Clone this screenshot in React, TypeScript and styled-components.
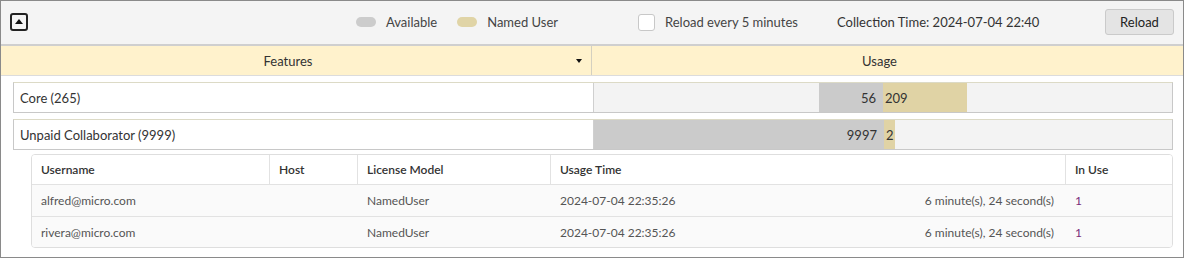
import React from 'react'
import styled, { createGlobalStyle } from 'styled-components'

const GlobalStyle = createGlobalStyle`
  html, body { margin: 0; padding: 0; background: #fff; }
  body { font-family: Lato, "Open Sans", sans-serif; color: #333; }
  * { box-sizing: border-box; }
`;

const Frame = styled.div`
  width: 1184px;
  height: 258px;
  border: 1px solid #8a8a8a;
  background: #fff;
  overflow: hidden;
`;

const Toolbar = styled.div`
  height: 45px;
  background: #f4f4f4;
  border-bottom: 2px solid #cfcfcf;
  display: grid;
  grid-template-columns: 346px 282px 199px 1fr 69px;
  align-items: center;
  padding: 0 9px 1px 9px;
  font-size: 13px;
`;

const CollapseButton = styled.button`
  width: 18px;
  height: 18px;
  border: 2px solid #222;
  border-radius: 3px;
  background: #f4f4f4;
  padding: 0;
  display: flex;
  align-items: center;
  justify-content: center;
  &::after {
    content: '';
    border-left: 4px solid transparent;
    border-right: 4px solid transparent;
    border-bottom: 5px solid #111;
    margin-top: -1px;
  }
`;

const Group = styled.div`
  display: flex;
  align-items: center;
  gap: 10px;
  white-space: nowrap;
`;

const Swatch = styled.span<{ $color: string }>`
  width: 20px;
  height: 10px;
  border-radius: 5px;
  background: ${(p) => p.$color};
`;

const LegendLabel = styled.span`
  color: #444;
  margin-right: 10px;
`;

const Checkbox = styled.span`
  width: 17px;
  height: 17px;
  border: 1px solid #c8c8c8;
  border-radius: 3px;
  background: #fff;
`;

const ReloadButton = styled.button`
  height: 26px;
  width: 69px;
  background: #e4e4e4;
  border: 1px solid #cacaca;
  border-radius: 3px;
  font: inherit;
  font-size: 13px;
  color: #222;
`;

const HeaderRow = styled.div`
  display: grid;
  grid-template-columns: 591px 1fr;
  height: 30px;
  background: #fff2cc;
  border-bottom: 1px solid #dcdcdc;
  font-size: 13px;
`;

const HeaderCell = styled.div<{ $divider?: boolean }>`
  position: relative;
  display: flex;
  align-items: center;
  justify-content: center;
  padding-right: 16px;
  border-right: ${(p) => (p.$divider ? '1px solid #d4d0c0' : 'none')};
`;

const Caret = styled.span`
  position: absolute;
  right: 9px;
  top: 13px;
  border-left: 3px solid transparent;
  border-right: 3px solid transparent;
  border-top: 4px solid #111;
`;

const Body = styled.div`
  padding: 6px 10px 0 12px;
  display: flex;
  flex-direction: column;
  gap: 6px;
`;

const FeatureRow = styled.div`
  display: grid;
  grid-template-columns: 580px 1fr;
  height: 31px;
  border: 1px solid #c8c8c8;
  border-top-color: #dcdac6;
  font-size: 13px;
`;

const FeatureName = styled.div`
  background: #fff;
  display: flex;
  align-items: center;
  padding-left: 6px;
  color: #333;
  border-right: 1px solid #cfcfcf;
`;

const UsageCell = styled.div`
  background: #f3f3f3;
  display: flex;
  align-items: stretch;
`;

const Bar = styled.div<{ $kind: 'available' | 'named' }>`
  background: ${(p) => (p.$kind === 'available' ? '#cbcbcb' : '#e0d3a5')};
  display: flex;
  align-items: center;
  justify-content: ${(p) => (p.$kind === 'available' ? 'flex-end' : 'flex-start')};
  padding: ${(p) => (p.$kind === 'available' ? '0 7px 0 0' : '0 0 0 2px')};
  color: #333;
  white-space: nowrap;
`;

const SubTable = styled.div`
  margin: -2px 0 0 18px;
  border: 1px solid #dedede;
  border-radius: 4px;
  overflow: hidden;
  font-size: 12px;
`;

const cols = '238px 88px 193px 515px 1fr';

const SubHead = styled.div`
  display: grid;
  grid-template-columns: ${cols};
  height: 30px;
  background: #fff;
  border-bottom: 1px solid #e2e2e2;
  font-weight: 600;
  color: #333;
`;

const SubHeadCell = styled.div<{ $last?: boolean }>`
  display: flex;
  align-items: center;
  padding-left: 9px;
  border-right: ${(p) => (p.$last ? 'none' : '1px solid #e2e2e2')};
`;

const SubRow = styled.div`
  display: grid;
  grid-template-columns: ${cols};
  height: 31px;
  background: #fafafa;
  color: #555;
  & + & { border-top: 1px solid #e2e2e2; }
`;

const SubCell = styled.div<{ $split?: boolean; $accent?: boolean }>`
  display: flex;
  align-items: center;
  justify-content: ${(p) => (p.$split ? 'space-between' : 'flex-start')};
  padding: 0 12px 0 9px;
  color: ${(p) => (p.$accent ? '#7b2d7b' : 'inherit')};
`;

const features = [
  { name: 'Core (265)', offset: 225, available: 56, availW: 64, named: 209, namedW: 84 },
  { name: 'Unpaid Collaborator (9999)', offset: 0, available: 9997, availW: 290, named: 2, namedW: 11 },
];

const users = [
  { user: 'alfred@micro.com', host: '', model: 'NamedUser', time: '2024-07-04 22:35:26', dur: '6 minute(s), 24 second(s)', inUse: 1 },
  { user: 'rivera@micro.com', host: '', model: 'NamedUser', time: '2024-07-04 22:35:26', dur: '6 minute(s), 24 second(s)', inUse: 1 },
];

export default function App() {
  return (
    <>
      <GlobalStyle />
      <Frame>
        <Toolbar>
          <div>
            <CollapseButton aria-label="collapse" />
          </div>
          <Group>
            <Swatch $color="#cccccc" />
            <LegendLabel>Available</LegendLabel>
            <Swatch $color="#e0d4a6" />
            <LegendLabel>Named User</LegendLabel>
          </Group>
          <Group>
            <Checkbox />
            <LegendLabel>Reload every 5 minutes</LegendLabel>
          </Group>
          <Group>Collection Time: 2024-07-04 22:40</Group>
          <ReloadButton>Reload</ReloadButton>
        </Toolbar>
        <HeaderRow>
          <HeaderCell $divider>
            Features
            <Caret />
          </HeaderCell>
          <HeaderCell>Usage</HeaderCell>
        </HeaderRow>
        <Body>
          {features.map((f) => (
            <FeatureRow key={f.name}>
              <FeatureName>{f.name}</FeatureName>
              <UsageCell>
                <div style={{ width: f.offset }} />
                <Bar $kind="available" style={{ width: f.availW }}>{f.available}</Bar>
                <Bar $kind="named" style={{ width: f.namedW }}>{f.named}</Bar>
              </UsageCell>
            </FeatureRow>
          ))}
          <SubTable>
            <SubHead>
              <SubHeadCell>Username</SubHeadCell>
              <SubHeadCell>Host</SubHeadCell>
              <SubHeadCell>License Model</SubHeadCell>
              <SubHeadCell>Usage Time</SubHeadCell>
              <SubHeadCell $last>In Use</SubHeadCell>
            </SubHead>
            {users.map((u) => (
              <SubRow key={u.user}>
                <SubCell>{u.user}</SubCell>
                <SubCell>{u.host}</SubCell>
                <SubCell>{u.model}</SubCell>
                <SubCell $split>
                  <span>{u.time}</span>
                  <span>{u.dur}</span>
                </SubCell>
                <SubCell $accent>{u.inUse}</SubCell>
              </SubRow>
            ))}
          </SubTable>
        </Body>
      </Frame>
    </>
  )
}
